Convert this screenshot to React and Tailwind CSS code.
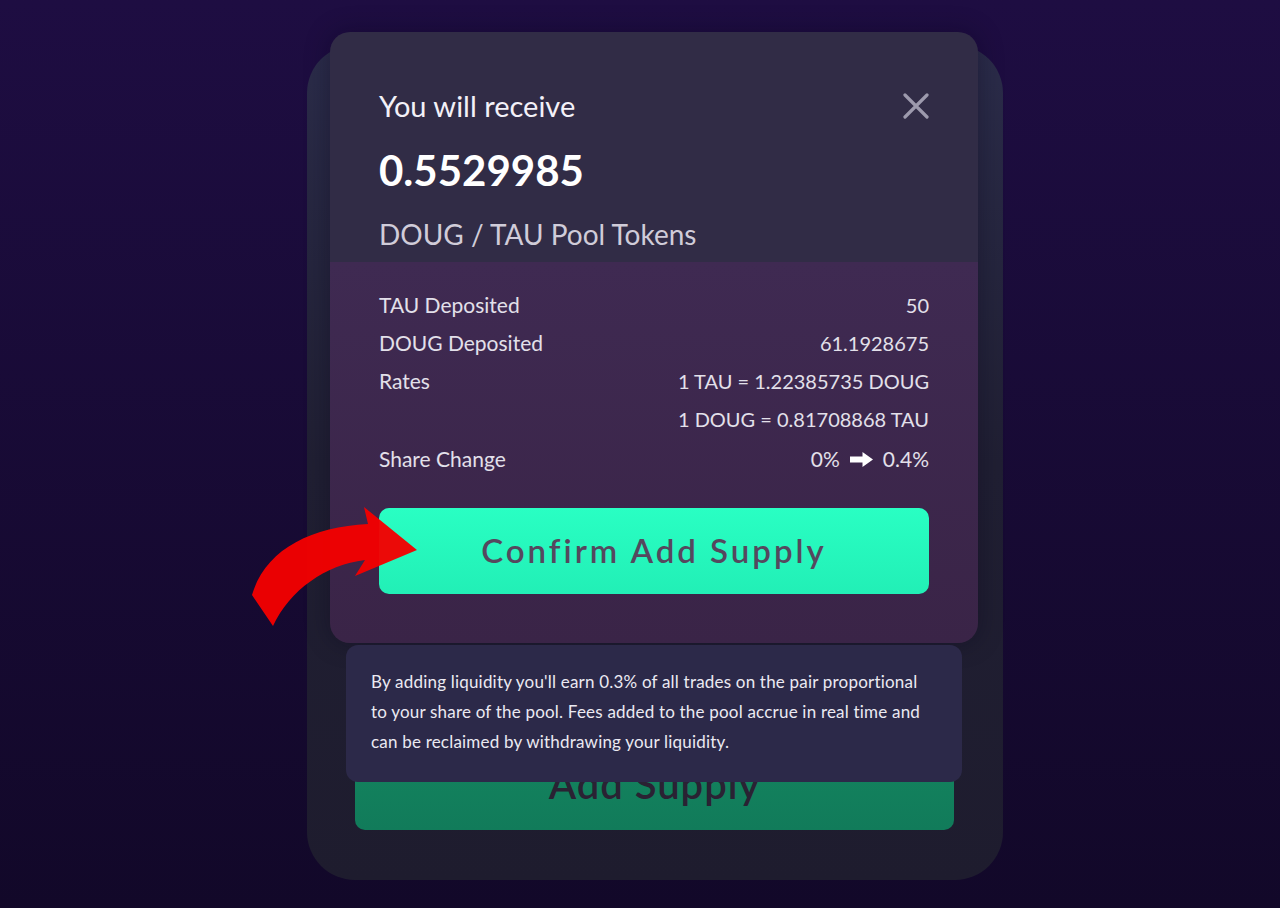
import React from "react";

function CloseIcon() {
  return (
    <svg width="26" height="26" viewBox="0 0 26 26" className="mt-[1px]">
      <path d="M2 2 L24 24 M24 2 L2 24" stroke="#9d9aad" strokeWidth="3.2" strokeLinecap="round" />
    </svg>
  );
}

function RightArrow() {
  return (
    <svg width="25" height="17" viewBox="0 0 25 17" className="mx-[9px] inline-block">
      <path d="M1 5.5 H13.5 V1 L24 8.5 L13.5 16 V11.5 H1 Z" fill="#ffffff" />
    </svg>
  );
}

function Row({ label, value, className = "", valueClass = "text-[20px]" }) {
  return (
    <div className={"flex items-center justify-between leading-[38px] text-[#e3e0ea] " + className}>
      <span className="text-[21px]">{label}</span>
      <span className={"flex items-center " + valueClass}>{value}</span>
    </div>
  );
}

export default function App() {
  return (
    <div className="relative h-[908px] w-full overflow-hidden bg-gradient-to-b from-[#1e0d42] to-[#120829] font-['Lato',sans-serif]">
      {/* background card */}
      <div className="ml-[307px] mt-[45px] flex h-[835px] w-[696px] flex-col justify-end rounded-[48px] bg-gradient-to-b from-[#2b2c4a] via-[#201f33] to-[#1e1c2e] pb-[50px] pl-[48px] pr-[49px]">
        <div className="flex h-[92px] w-full items-center justify-center rounded-[10px] bg-gradient-to-b from-[#14855f] to-[#117b5a] text-[40px] font-semibold tracking-wide text-[#2a2233]">
          Add Supply
        </div>
      </div>

      {/* modal */}
      <div className="absolute left-[330px] top-[32px] flex w-[648px] flex-col">
        <div className="overflow-hidden rounded-[20px] shadow-[0_0_24px_rgba(10,5,25,0.35)]">
          <div className="bg-[#312c46] px-[49px] pb-[14px] pt-[60px]">
            <div className="flex items-start justify-between">
              <div className="text-[29px] leading-[28px] text-[#f3f1f8]">You will receive</div>
              <CloseIcon />
            </div>
            <div className="mt-[29px] text-[42px] font-bold leading-[42px] text-white">0.5529985</div>
            <div className="mt-[30px] text-[28px] leading-[27px] text-[#d0ccd9]">DOUG / TAU Pool Tokens</div>
          </div>
          <div className="bg-gradient-to-b from-[#3f2a52] to-[#3a2447] px-[49px] pb-[49px] pt-[24px]">
            <Row label="TAU Deposited" value="50" />
            <Row label="DOUG Deposited" value="61.1928675" />
            <Row label="Rates" value="1 TAU = 1.22385735 DOUG" />
            <Row label="" value="1 DOUG = 0.81708868 TAU" />
            <Row
              label="Share Change"
              className="mt-[2px]"
              valueClass="text-[21px]"
              value={
                <>
                  <span>0%</span>
                  <RightArrow />
                  <span>0.4%</span>
                </>
              }
            />
            <button className="mt-[30px] flex h-[86px] w-full items-center justify-center rounded-[10px] bg-gradient-to-b from-[#29ffc3] to-[#22efb6] text-[33px] font-semibold tracking-[3px] text-[#55485e]">
              Confirm Add Supply
            </button>
          </div>
        </div>
        <div className="mt-[2px] w-[616px] self-center whitespace-nowrap rounded-[12px] bg-[#2c2949] pb-[25px] pl-[25px] pr-[20px] pt-[22px] text-[17px] leading-[30px] tracking-[0.2px] text-[#ebe9f2]">
          By adding liquidity you'll earn 0.3% of all trades on the pair proportional
          <br />
          to your share of the pool. Fees added to the pool accrue in real time and
          <br />
          can be reclaimed by withdrawing your liquidity.
        </div>
      </div>

      {/* red pointer arrow */}
      <svg
        className="absolute left-[245px] top-[500px]"
        width="180"
        height="130"
        viewBox="245 500 180 130"
      >
        <path
          d="M252 595 C265 550 310 527 368 524 L364 507 L417 550 L355 576 L365 560 C325 565 290 590 273 626 Z"
          fill="#f40000"
          fillOpacity="0.96"
        />
      </svg>
    </div>
  );
}
